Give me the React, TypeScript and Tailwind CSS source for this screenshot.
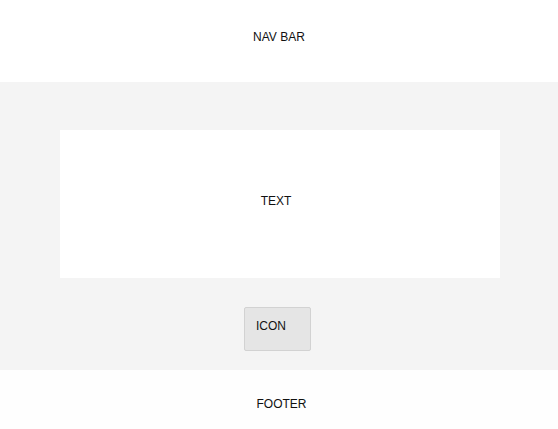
export default function App() {
  return (
    <div className="w-[558px] h-[429px] flex flex-col bg-white text-[12px] leading-[14px] text-[#111] font-['Liberation_Sans',Arial,sans-serif]">
      <header className="h-[82px] pt-[30px] text-center">NAV BAR</header>

      <main className="h-[288px] bg-[#f4f4f4] flex flex-col pt-[48px]">
        <section className="ml-[60px] w-[440px] h-[148px] bg-white pt-[64px] text-center pr-[8px]">
          TEXT
        </section>
        <div className="mt-[29px] flex pl-[244px]">
          <button className="w-[67px] h-[44px] bg-[#e5e5e5] border border-[#d2d2d2] rounded-[2px] pl-[11px] pt-[11px] text-left self-start flex items-start">
            ICON
          </button>
        </div>
      </main>

      <footer className="flex-1 bg-[#fefefe] pt-[27px] text-center pl-[5px]">FOOTER</footer>
    </div>
  )
}
